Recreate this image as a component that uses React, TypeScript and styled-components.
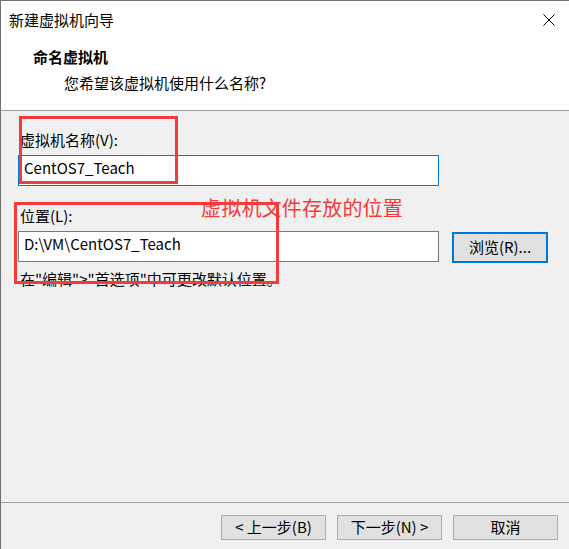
import React from "react";
import styled, { createGlobalStyle } from "styled-components";

const GlobalStyle = createGlobalStyle`
  html, body {
    margin: 0;
    padding: 0;
    background: #f0f0f0;
  }
  body {
    font-family: "Microsoft YaHei UI", "Microsoft YaHei", "Noto Sans CJK SC", sans-serif;
    font-size: 15px;
    color: #000;
  }
`;

const Window = styled.div`
  position: relative;
  box-sizing: border-box;
  width: 569px;
  height: 549px;
  display: flex;
  flex-direction: column;
  border-left: 1px solid #707070;
  border-top: 1px solid #707070;
  background: #f0f0f0;
  overflow: hidden;
`;

const Top = styled.div`
  background: #fff;
  border-bottom: 1px solid #a0a0a0;
`;

const TitleBar = styled.div`
  height: 38px;
  display: flex;
  align-items: center;
  justify-content: space-between;
  padding: 0 14px 0 8px;
  line-height: 20px;
`;

const CloseButton = styled.span`
  display: flex;
  width: 12px;
  height: 12px;
`;

const Header = styled.div`
  padding: 8px 0 17px 32px;
  line-height: 20px;
`;

const HeaderTitle = styled.div`
  font-weight: bold;
`;

const HeaderSub = styled.div`
  margin: 6px 0 0 31px;
`;

const Body = styled.div`
  flex: 1;
  padding: 19px 0 0 17px;
  line-height: 20px;
`;

const Label = styled.div<{ $top?: number }>`
  margin: ${(p) => p.$top ?? 0}px 0 5px 2px;
`;

const Row = styled.div`
  display: flex;
  align-items: flex-start;
  gap: 13px;
`;

const Field = styled.div<{ $focused?: boolean }>`
  box-sizing: border-box;
  width: 421px;
  height: 31px;
  background: #fff;
  border: 1px solid ${(p) => (p.$focused ? "#0078d7" : "#7a7a7a")};
  padding: 0 5px 5px;
  display: flex;
  align-items: center;
`;

const Hint = styled.div`
  margin: 6px 0 0 2px;
`;

const Button = styled.div<{ $default?: boolean; $top?: number }>`
  box-sizing: border-box;
  width: ${(p) => (p.$default ? 96 : 105)}px;
  height: ${(p) => (p.$default ? 31 : 25)}px;
  margin-top: ${(p) => p.$top ?? 0}px;
  padding-bottom: 2px;
  background: #e1e1e1;
  border: ${(p) => (p.$default ? "2px solid #0078d7" : "1px solid #adadad")};
  display: flex;
  align-items: center;
  justify-content: center;
  white-space: pre;
`;

const Footer = styled.div`
  border-top: 1px solid #a0a0a0;
  height: 47px;
  box-sizing: border-box;
  padding: 12px 11px 0 0;
  display: flex;
  justify-content: flex-end;
  gap: 11px;
  line-height: 20px;
`;

const Annotation = styled.div<{ $x: number; $y: number; $w: number; $h: number }>`
  position: absolute;
  left: ${(p) => p.$x}px;
  top: ${(p) => p.$y}px;
  width: ${(p) => p.$w}px;
  height: ${(p) => p.$h}px;
  box-sizing: border-box;
  border: 3px solid #f43a3a;
  pointer-events: none;
`;

const Note = styled.div`
  position: absolute;
  left: 200px;
  top: 194px;
  font-size: 20px;
  line-height: 26px;
  color: #f43a3a;
  letter-spacing: 0.2px;
`;

export default function App() {
  return (
    <>
      <GlobalStyle />
      <Window>
        <Top>
          <TitleBar>
            <span>新建虚拟机向导</span>
            <CloseButton>
              <svg width="12" height="12" viewBox="0 0 12 12">
                <path d="M0.5 0.5 L11.5 11.5 M11.5 0.5 L0.5 11.5" stroke="#000" strokeWidth="1" />
              </svg>
            </CloseButton>
          </TitleBar>
          <Header>
            <HeaderTitle>命名虚拟机</HeaderTitle>
            <HeaderSub>您希望该虚拟机使用什么名称?</HeaderSub>
          </Header>
        </Top>
        <Body>
          <Label>虚拟机名称(V):</Label>
          <Field $focused>CentOS7_Teach</Field>
          <Label $top={20}>位置(L):</Label>
          <Row>
            <Field>D:\VM\CentOS7_Teach</Field>
            <Button $default $top={1}>浏览(R)...</Button>
          </Row>
          <Hint>在"编辑"&gt;"首选项"中可更改默认位置。</Hint>
        </Body>
        <Footer>
          <Button>{"< 上一步(B)"}</Button>
          <Button>{"下一步(N) >"}</Button>
          <Button>取消</Button>
        </Footer>
        <Annotation $x={18} $y={115} $w={159} $h={68} />
        <Annotation $x={13} $y={201} $w={265} $h={82} />
        <Note>虚拟机文件存放的位置</Note>
      </Window>
    </>
  );
}
